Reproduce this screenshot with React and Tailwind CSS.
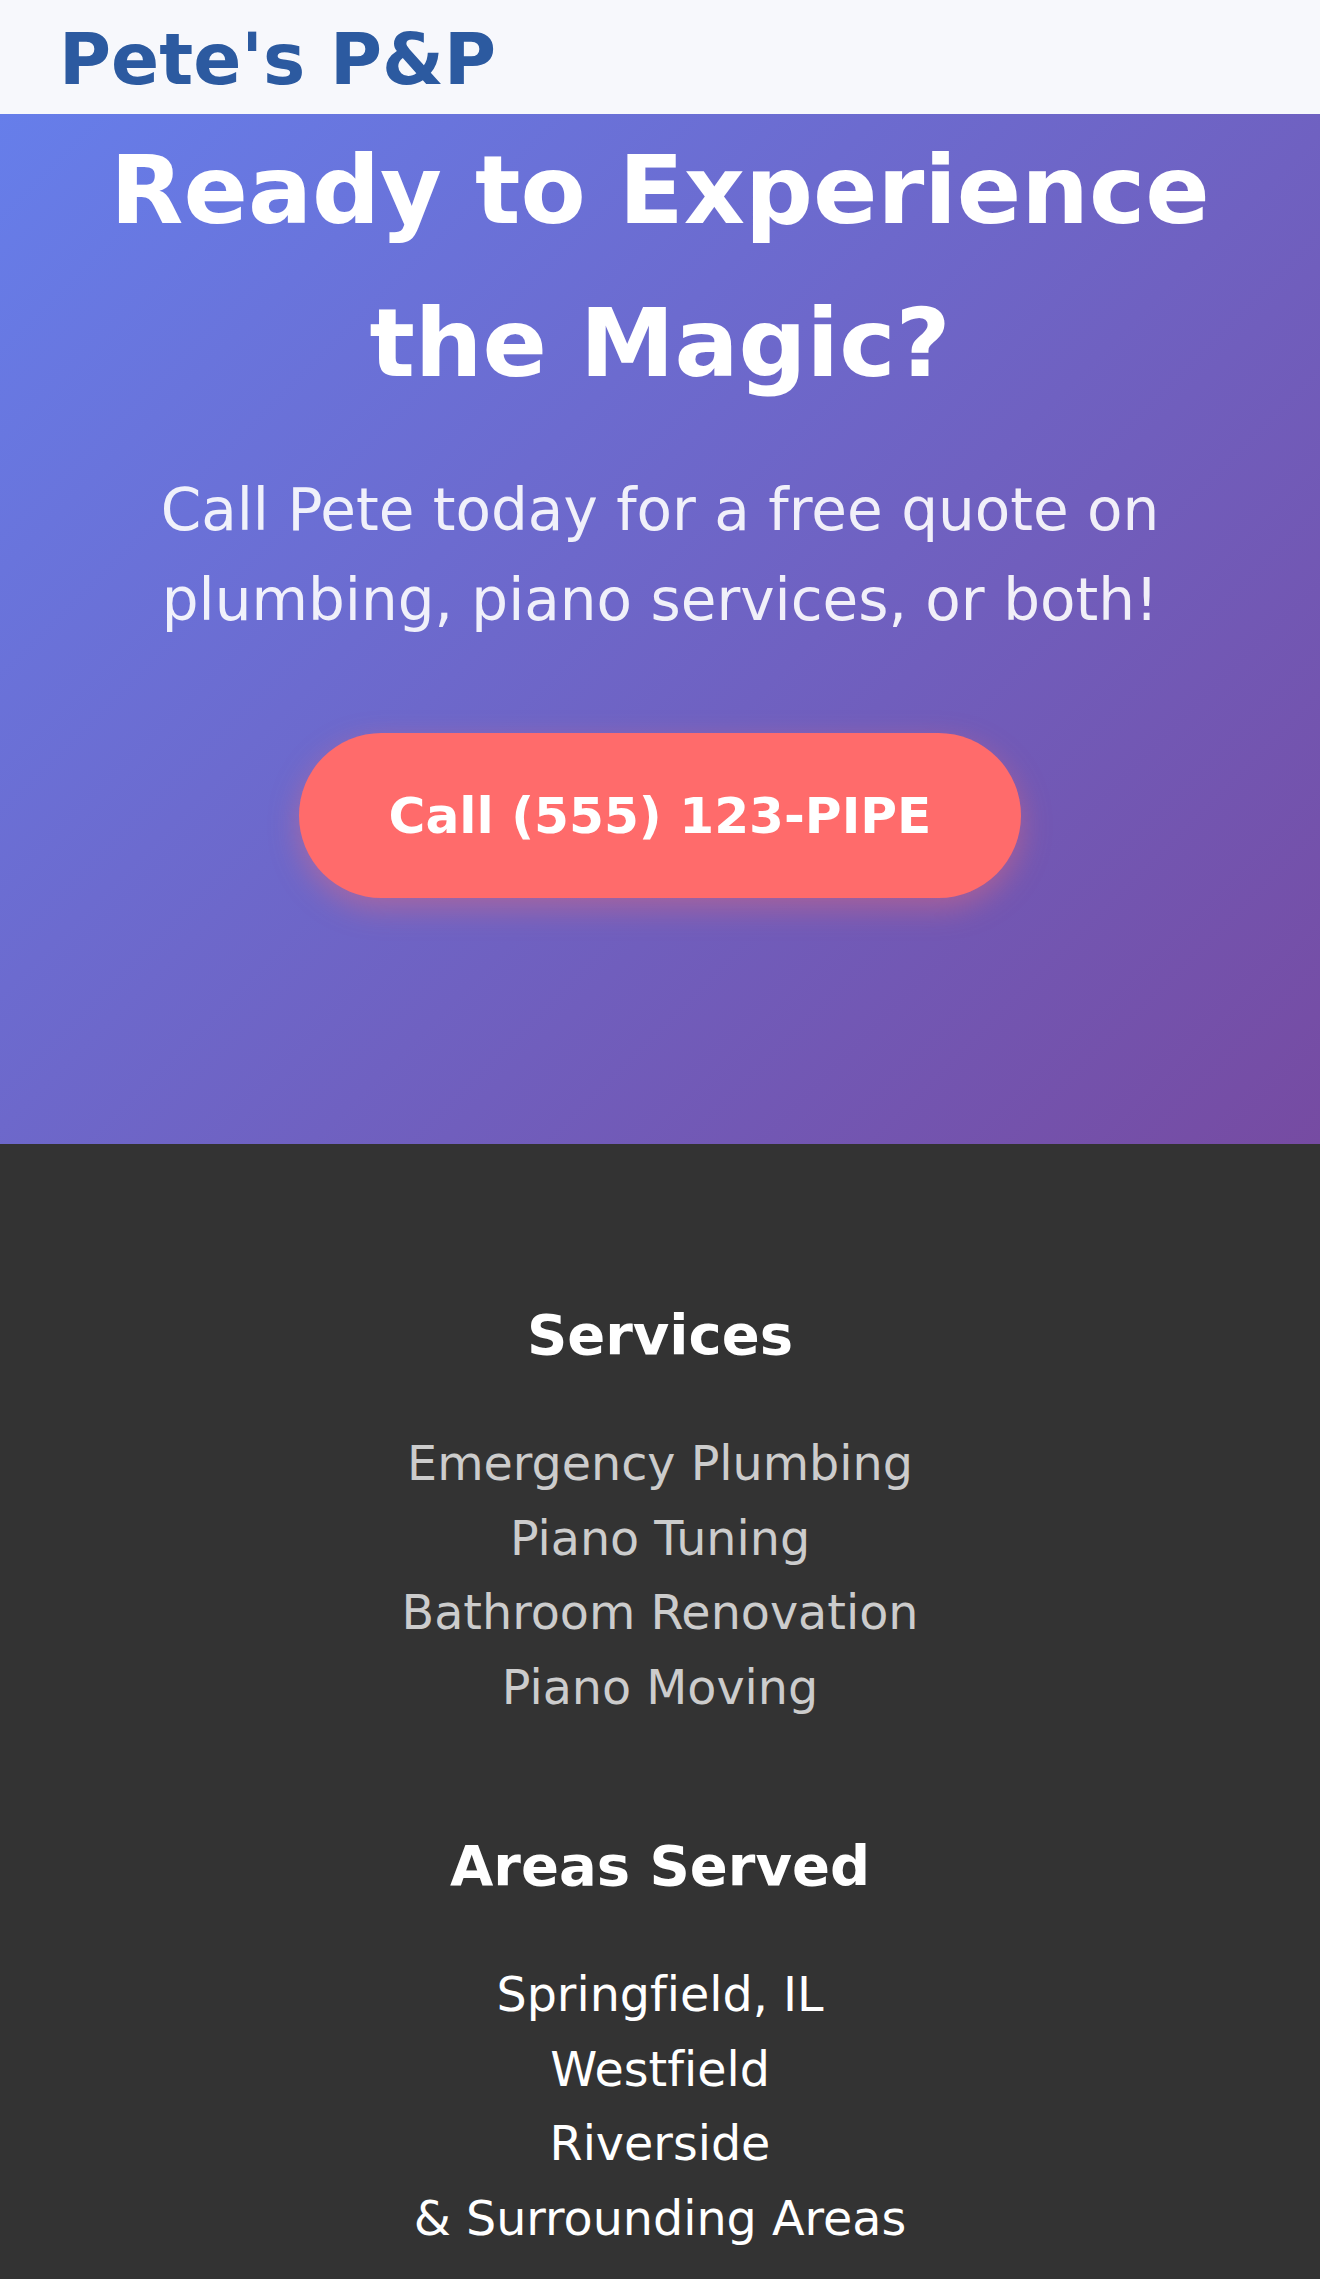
const services = ['Emergency Plumbing', 'Piano Tuning', 'Bathroom Renovation', 'Piano Moving'];
const areas = ['Springfield, IL', 'Westfield', 'Riverside', '& Surrounding Areas'];

function FooterColumn({ title, items, itemClass }) {
  return (
    <div className="text-center">
      <h3 className="text-[56px] leading-[88px] font-bold text-white mb-[48px]">{title}</h3>
      <ul>
        {items.map((item) => (
          <li key={item} className={`text-[47.6px] leading-[74.7px] ${itemClass}`}>
            {item}
          </li>
        ))}
      </ul>
    </div>
  );
}

export default function App() {
  return (
    <div className="min-h-[2279px] flex flex-col bg-[#333333] font-['DejaVu_Sans',sans-serif] [font-variant-ligatures:none]">
      {/* Header */}
      <header className="h-[114px] bg-[#f7f8fc] pl-[59px] pt-[18px]">
        <div className="text-[71px] leading-[84px] font-bold text-[#2c5aa0]">Pete's P&amp;P</div>
      </header>

      {/* CTA hero */}
      <section className="bg-[linear-gradient(135deg,#667eea_0%,#764ba2_100%)] pb-[246px] text-center">
        <div className="max-w-[1200px] mx-auto flex flex-col items-center">
          <h2 className="text-[95px] leading-[153px] font-bold text-white">
            Ready to Experience the Magic?
          </h2>
          <p className="mt-[45px] text-[58px] leading-[90px] text-white/90">
            Call Pete today for a free quote on plumbing, piano services, or both!
          </p>
          <a
            href="#"
            className="mt-[88px] h-[165px] w-[722px] flex items-center justify-center rounded-full bg-[#ff6b6b] text-[50.2px] font-bold text-white shadow-[0_10px_30px_rgba(255,107,107,0.4)]"
          >
            Call (555) 123-PIPE
          </a>
        </div>
      </section>

      {/* Footer */}
      <footer className="flex-1 bg-[#333333] pt-[147px] pb-[24px]">
        <div className="flex flex-col gap-[96px]">
          <FooterColumn title="Services" items={services} itemClass="text-[#cccccc]" />
          <FooterColumn title="Areas Served" items={areas} itemClass="text-white" />
        </div>
      </footer>
    </div>
  );
}
